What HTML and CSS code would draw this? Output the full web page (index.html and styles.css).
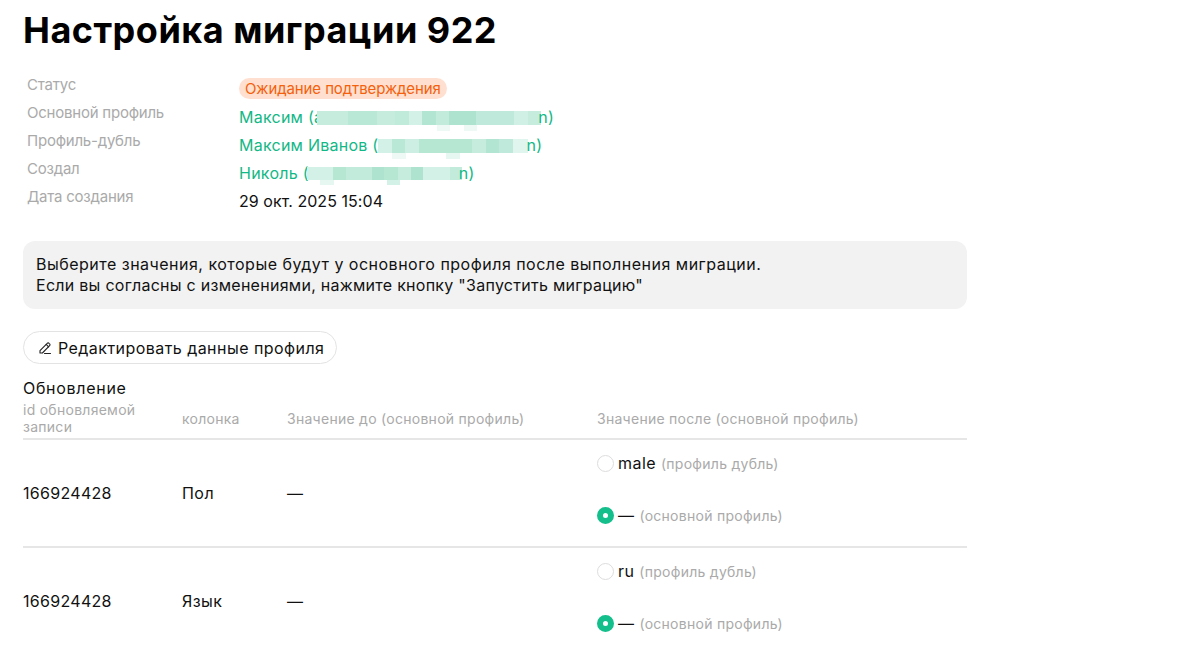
FILE: index.html
```html
<!DOCTYPE html>
<html>
<head>
  <meta charset="utf-8">
  <title>Настройка миграции 922</title>
  <link rel="stylesheet" href="styles.css">
</head>
<body>
  <main class="page">
    <h1>Настройка миграции 922</h1>
    <dl class="meta">
      <dt>Статус</dt>
      <dd><span class="badge">Ожидание подтверждения</span></dd>
      <dt>Основной профиль</dt>
      <dd><a href="#">Максим (a<span class="blur blur-1"></span>n)</a></dd>
      <dt>Профиль-дубль</dt>
      <dd><a href="#">Максим Иванов (<span class="blur blur-2"></span>n)</a></dd>
      <dt>Создал</dt>
      <dd><a href="#">Николь (<span class="blur blur-3"></span>n)</a></dd>
      <dt>Дата создания</dt>
      <dd class="date">29 окт. 2025 15:04</dd>
    </dl>

    <div class="note">
      <p>Выберите значения, которые будут у основного профиля после выполнения миграции.</p>
      <p class="note-hint">Если вы согласны с изменениями, нажмите кнопку "Запустить миграцию"</p>
    </div>

    <button class="edit-btn">
      <svg width="14" height="14" viewBox="0 0 14 14" fill="none" stroke="#222" stroke-width="1.1" stroke-linejoin="round" stroke-linecap="round">
        <path d="M2 9.6 9.2 2.3a1.3 1.3 0 0 1 1.9 0l.5.5a1.3 1.3 0 0 1 0 1.9L4.4 12H2z"/>
        <path d="M8.2 3.4l2.4 2.4M6.5 12.5h6"/>
      </svg>
      Редактировать данные профиля
    </button>

    <h2>Обновление</h2>
    <table class="changes">
      <thead>
        <tr>
          <th class="col-id">id обновляемой записи</th>
          <th class="col-name">колонка</th>
          <th class="col-before">Значение до (основной профиль)</th>
          <th>Значение после (основной профиль)</th>
        </tr>
      </thead>
      <tbody>
        <tr>
          <td class="num">166924428</td>
          <td>Пол</td>
          <td>—</td>
          <td>
            <div class="choices">
              <label class="choice"><span class="radio"></span>male <span class="hint">(профиль дубль)</span></label>
              <label class="choice"><span class="radio checked"></span>— <span class="hint">(основной профиль)</span></label>
            </div>
          </td>
        </tr>
        <tr>
          <td class="num">166924428</td>
          <td>Язык</td>
          <td>—</td>
          <td>
            <div class="choices">
              <label class="choice"><span class="radio"></span>ru <span class="hint">(профиль дубль)</span></label>
              <label class="choice"><span class="radio checked"></span>— <span class="hint">(основной профиль)</span></label>
            </div>
          </td>
        </tr>
      </tbody>
    </table>
  </main>
</body>
</html>
```

FILE: styles.css
```css
html, body {
  margin: 0;
  padding: 0;
  height: 654px;
  overflow: hidden;
  background: #fff;
  color: #111;
  font-family: "Inter", "Noto Sans", sans-serif;
  font-size: 16px;
  letter-spacing: .45px;
}
.page {
  width: 944px;
  margin-left: 23px;
}
h1 {
  margin: 0;
  padding-top: 8px;
  font-size: 36px;
  line-height: 44px;
  font-weight: 700;
  letter-spacing: .5px;
  color: #000;
}
.meta {
  display: grid;
  grid-template-columns: 212px 1fr;
  grid-auto-rows: 28px;
  margin: 21px 0 0 4px;
}
.meta dt {
  color: #aaa;
  font-size: 15px;
  line-height: 24px;
  letter-spacing: -.22px;
}
.meta dd {
  margin: 0;
  height: 28px;
  line-height: 32px;
  letter-spacing: .25px;
}
.meta .date {
  letter-spacing: .05px;
}
.meta a {
  color: #12b886;
  text-decoration: none;
}
.badge {
  display: inline-block;
  padding: 0 6px;
  height: 21px;
  line-height: 21px;
  border-radius: 11px;
  background: #ffe0d0;
  color: #f4600c;
  font-size: 15px;
  letter-spacing: -.1px;
  vertical-align: 1px;
}
.blur {
  display: inline-block;
  height: 20px;
  vertical-align: -8px;
  background-repeat: no-repeat;
}
.blur-1 {
  width: 224px;
  margin: 0 -3px 0 -6px;
  background-image:
    linear-gradient(90deg, #c6ecde 0 14%, #b9e8d6 14% 27%, #c6ecde 27% 35%, #c0ead9 35% 41%, #d3f1e7 41% 47%, #b3e6d2 47% 53%, #c2ebdc 53% 59%, #aee4cf 59% 71%, #bfeadb 71% 88%, #d0f0e5 88% 94%, #c6ecde 94% 100%),
    linear-gradient(90deg, #eef9f5 0 13px, transparent 13px 27px, #eef9f5 27px 40px);
  background-size: 100% 14px, 40px 6px;
  background-position: 0 0, 120px 14px;
}
.blur-2 {
  width: 150px;
  margin-right: -2px;
  background-image:
    linear-gradient(90deg, #d3f1e7 0 9%, #b9e8d6 9% 18%, #cdefe3 18% 27%, #b5e7d3 27% 63%, #c6ecde 63% 72%, #b3e6d2 72% 81%, #bfeadb 81% 90%, #e0f5ee 90% 100%),
    linear-gradient(90deg, #eef9f5 0 14px, transparent 14px 54px, #e6f7f1 54px 68px);
  background-size: 100% 14px, 68px 6px;
  background-position: 0 0, 14px 14px;
}
.blur-3 {
  width: 155px;
  margin: 0 -3px 0 -2px;
  background-image:
    linear-gradient(90deg, #d3f1e7 0 17%, #b5e7d3 17% 25%, #c2ebdc 25% 42%, #aee4cf 42% 50%, #b5e7d3 50% 59%, #c6ecde 59% 67%, #aee4cf 67% 75%, #d3f1e7 75% 92%, #c2ebdc 92% 100%),
    linear-gradient(90deg, #e6f7f1 0 14px, transparent 14px 67px, #d3f1e7 67px 80px);
  background-size: 100% 13px, 80px 5px;
  background-position: 0 0, 13px 13px;
}
.note {
  margin-top: 28px;
  padding: 13px;
  height: 68px;
  box-sizing: border-box;
  background: #f2f2f2;
  border-radius: 12px;
  line-height: 21px;
}
.note p {
  margin: 0;
  letter-spacing: .49px;
}
.note .note-hint {
  letter-spacing: .27px;
}
.edit-btn {
  display: flex;
  align-items: center;
  gap: 6px;
  margin-top: 22px;
  height: 33px;
  padding: 0 12px 0 14px;
  background: #fff;
  border: 1px solid #e3e3e3;
  border-radius: 17px;
  color: #111;
  font: inherit;
  letter-spacing: inherit;
}
h2 {
  margin: 14px 0 0;
  font-size: 16px;
  line-height: 20px;
  font-weight: 400;
  letter-spacing: .7px;
}
.changes {
  width: 100%;
  table-layout: fixed;
  border-collapse: collapse;
}
.changes th {
  padding: 0;
  height: 40px;
  vertical-align: middle;
  text-align: left;
  font-weight: 400;
  font-size: 14px;
  line-height: 17px;
  letter-spacing: .27px;
  color: #aaa;
  border-bottom: 2px solid #e6e6e6;
}
.col-id { width: 159px; }
.col-name { width: 105px; }
.col-before { width: 310px; }
.changes td {
  padding: 0;
  height: 106px;
  border-bottom: 2px solid #e6e6e6;
}
.changes .num {
  letter-spacing: .3px;
}
.choices {
  display: flex;
  flex-direction: column;
  gap: 34px;
  padding-bottom: 8px;
}
.choice {
  display: flex;
  align-items: center;
  height: 18px;
  white-space: pre;
}
.radio {
  width: 15px;
  height: 15px;
  margin-right: 4px;
  border: 1px solid #ddd;
  border-radius: 50%;
  flex: none;
}
.radio.checked {
  box-sizing: content-box;
  width: 5px;
  height: 5px;
  border: 6px solid #14bf8c;
  background: #fff;
}
.hint {
  color: #aaa;
  font-size: 14px;
  letter-spacing: .27px;
}
```
